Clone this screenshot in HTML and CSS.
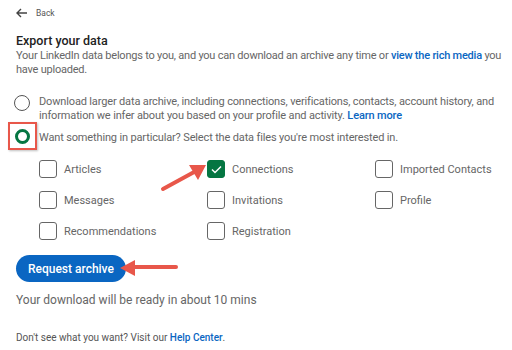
FILE: index.html
```html
<!DOCTYPE html>
<html lang="en">
<head>
    <meta charset="UTF-8">
    <meta name="viewport" content="width=device-width, initial-scale=1.0">
    <title>Export your data</title>
    <link rel="stylesheet" href="styles.css">
</head>
<body>
    <div class="page">
        <a href="#" class="back-link">
            <svg width="12" height="10" viewBox="0 0 12 10"><path d="M5 1 1 5l4 4M1 5h10" fill="none" stroke="#444" stroke-width="1.4"/></svg>
            <span>Back</span>
        </a>

        <h1>Export your data</h1>
        <p class="intro">Your LinkedIn data belongs to you, and you can download an archive any time or <a href="#">view the rich media</a> you have uploaded.</p>

        <div class="options">
            <label class="option">
                <span class="radio"></span>
                <span class="option-text">Download larger data archive, including connections, verifications, contacts, account history, and information we infer about you based on your profile and activity. <a href="#">Learn more</a></span>
            </label>
            <label class="option selected">
                <span class="radio-wrap"><span class="radio checked"></span></span>
                <span class="option-text">Want something in particular? Select the data files you're most interested in.</span>
            </label>
        </div>

        <div class="files">
            <label class="file"><span class="box"></span>Articles</label>
            <label class="file"><span class="box checked">
                <svg width="11" height="9" viewBox="0 0 11 9"><path d="M1 4.5 4 7.5 10 1.5" fill="none" stroke="#fff" stroke-width="1.5"/></svg>
            </span>Connections</label>
            <label class="file"><span class="box"></span>Imported Contacts</label>
            <label class="file"><span class="box"></span>Messages</label>
            <label class="file"><span class="box"></span>Invitations</label>
            <label class="file"><span class="box"></span>Profile</label>
            <label class="file"><span class="box"></span>Recommendations</label>
            <label class="file"><span class="box"></span>Registration</label>
        </div>

        <button class="btn">Request archive</button>

        <p class="ready">Your download will be ready in about 10 mins</p>
        <p class="help">Don't see what you want? Visit our <a href="#">Help Center</a>.</p>

        <!-- annotation arrows -->
        <svg class="arrow arrow-check" width="50" height="32" viewBox="0 0 50 32">
            <path d="M3 27 36 9" stroke="#e8574a" stroke-width="4" stroke-linecap="round"/>
            <path d="M46 3 29 3 38 18Z" fill="#e8574a"/>
        </svg>
        <svg class="arrow arrow-btn" width="62" height="20" viewBox="0 0 62 20">
            <path d="M58 9H14" stroke="#e8574a" stroke-width="4" stroke-linecap="round"/>
            <path d="M2 10 17 2 17 18Z" fill="#e8574a"/>
        </svg>
    </div>
</body>
</html>
```

FILE: styles.css
```css
* {
    margin: 0;
    padding: 0;
    box-sizing: border-box;
}

body {
    font-family: Roboto, "Open Sans", sans-serif;
    background: #fff;
    color: #666;
}

a {
    color: #0a66c2;
    font-weight: 500;
    text-decoration: none;
}

.page {
    position: relative;
    width: 512px;
    height: 350px;
    padding: 6px 4px 0 16px;
}

.back-link {
    display: flex;
    align-items: center;
    gap: 8px;
    height: 14px;
    color: #555;
    font-weight: 400;
    font-size: 8.5px;
}

h1 {
    margin-top: 13px;
    font-size: 12.5px;
    font-weight: 500;
    color: #222;
    line-height: 16px;
}

.intro {
    font-size: 11px;
    line-height: 14px;
    letter-spacing: -0.22px;
}

.options {
    margin-top: 18px;
}

.option {
    display: flex;
    align-items: flex-start;
    gap: 9px;
    font-size: 11px;
    line-height: 14px;
    letter-spacing: -0.15px;
}

.option .option-text {
    max-width: 458px;
}

.option + .option {
    margin-top: 7px;
}

.radio {
    flex: none;
    width: 16px;
    height: 16px;
    margin-left: -2px;
    border: 1px solid #555;
    border-radius: 50%;
}

.radio.checked {
    width: 15px;
    height: 15px;
    margin: 0;
    border: 3.5px solid #057642;
}

.radio-wrap {
    display: flex;
    align-items: center;
    justify-content: center;
    width: 29px;
    height: 28px;
    margin: -8px -7px 0 -8px;
    border: 2.5px solid #e8574a;
    box-shadow: 1px 1px 2px rgba(0,0,0,0.25);
}

.option.selected .option-text {
    margin-top: 1px;
}

.files {
    display: grid;
    grid-template-columns: 168px 168px 1fr;
    row-gap: 13px;
    margin-top: 10px;
    padding-left: 23px;
}

.file {
    display: flex;
    align-items: center;
    gap: 7px;
    font-size: 11px;
    line-height: 17px;
}

.box {
    flex: none;
    display: flex;
    align-items: center;
    justify-content: center;
    width: 18px;
    height: 18px;
    border: 1px solid #666;
    border-radius: 3px;
}

.box.checked {
    background: #057642;
    border-color: #057642;
}

.btn {
    display: block;
    margin-top: 15px;
    padding: 0 12px;
    height: 27px;
    background: #0a66c2;
    color: white;
    border: none;
    border-radius: 14px;
    font-family: inherit;
    font-size: 12px;
    font-weight: 500;
}

.ready {
    margin-top: 10px;
    font-size: 12px;
    line-height: 16px;
}

.help {
    margin-top: 23px;
    font-size: 10px;
    line-height: 14px;
    color: #555;
}

.arrow {
    position: absolute;
}

.arrow-check {
    left: 160px;
    top: 162px;
}

.arrow-btn {
    left: 118px;
    top: 258px;
}
```
